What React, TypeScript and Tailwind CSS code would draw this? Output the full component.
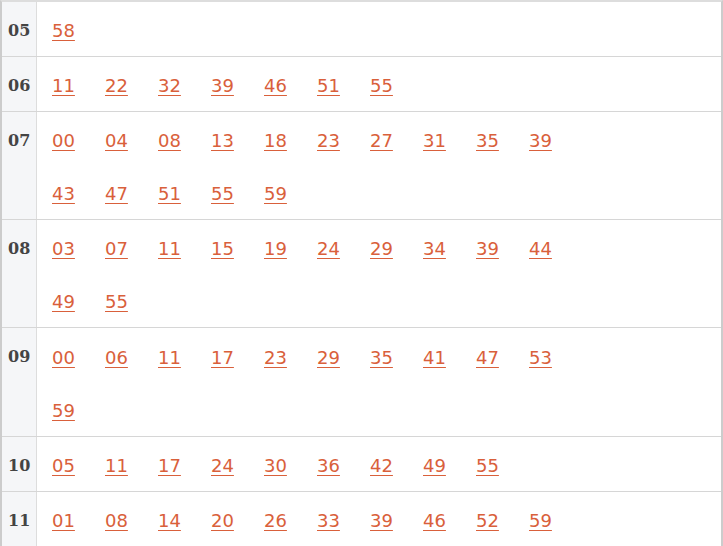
const rows: [string, string[]][] = [
  ["05", ["58"]],
  ["06", ["11", "22", "32", "39", "46", "51", "55"]],
  ["07", ["00", "04", "08", "13", "18", "23", "27", "31", "35", "39", "43", "47", "51", "55", "59"]],
  ["08", ["03", "07", "11", "15", "19", "24", "29", "34", "39", "44", "49", "55"]],
  ["09", ["00", "06", "11", "17", "23", "29", "35", "41", "47", "53", "59"]],
  ["10", ["05", "11", "17", "24", "30", "36", "42", "49", "55"]],
  ["11", ["01", "08", "14", "20", "26", "33", "39", "46", "52", "59"]],
];

export default function App() {
  return (
    <div className="w-[723px] h-[546px] overflow-hidden bg-white">
      <div className="border-l-2 border-r-2 border-t-2 border-l-[#cccccc] border-r-[#cccccc] border-t-[#dddddd]">
        {rows.map(([hour, mins], i) => (
          <div key={hour} className={i > 0 ? "flex border-t border-[#d6d6d6]" : "flex"}>
            <div
              className="w-[35px] shrink-0 bg-[#f5f6f8] border-r border-[#dddddd] pl-[6px] pt-[4px] text-[16px] leading-[50px] font-bold text-[#444444]"
              style={{ fontFamily: '"DejaVu Serif", serif' }}
            >
              {hour}
            </div>
            <div
              className={hour === "09" ? "flex flex-wrap w-[545px] pl-[15px] pt-[2px] text-[18px] leading-[53px]" : "flex flex-wrap w-[545px] pl-[15px] pt-px text-[18px] leading-[53px]"}
              style={{ fontFamily: '"DejaVu Sans", Verdana, sans-serif' }}
            >
              {mins.map((m, j) => (
                <span key={j} className="relative top-px w-[53px]">
                  <a href="#" className="text-[#d9603b] underline underline-offset-[3px] decoration-1">
                    {m}
                  </a>
                </span>
              ))}
            </div>
          </div>
        ))}
      </div>
    </div>
  );
}
